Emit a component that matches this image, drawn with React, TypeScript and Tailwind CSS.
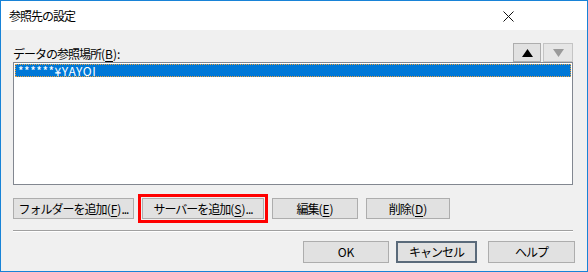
const font = "font-['Noto_Sans_CJK_JP',sans-serif]";

function Btn({
  w,
  children,
  strong,
  highlight,
}: {
  w: string;
  children: React.ReactNode;
  strong?: boolean;
  highlight?: boolean;
}) {
  return (
    <div
      className={`flex h-full shrink-0 items-center justify-center whitespace-nowrap bg-[#e1e1e1] text-[12px] leading-none tracking-[-1px] text-black ${w} ${
        strong ? "border-2 border-[#5a6a7a]" : "border border-[#adadad]"
      } ${highlight ? "outline-[3px] outline-offset-1 outline-[#ff0000] outline" : ""}`}
    >
      {children}
    </div>
  );
}

function Acc({ k }: { k: string }) {
  return (
    <span className="tracking-normal">
      (<span className="underline underline-offset-2">{k}</span>)
    </span>
  );
}

export default function App() {
  return (
    <div className={`flex h-[272px] w-[588px] flex-col border border-[#1883d7] bg-[#f0f0f0] ${font}`}>
      {/* タイトルバー */}
      <div className="flex h-[29px] shrink-0 items-center justify-between bg-white pl-[8px] pr-[73px]">
        <span className="text-[12px] tracking-[-1px] text-black">参照先の設定</span>
        <svg width="11" height="11" viewBox="0 0 11 11" className="mt-[1px]">
          <path d="M0.5 0.5 L10.5 10.5 M10.5 0.5 L0.5 10.5" stroke="#111" strokeWidth="1" />
        </svg>
      </div>

      {/* 本体 */}
      <div className="flex flex-1 flex-col pl-[12px] pr-[14px] pt-[12px]">
        <div className="flex h-[20px] items-end justify-between">
          <span className="pb-[2px] text-[12px] leading-none tracking-[-1px] text-black">
            データの参照場所<Acc k="B" />:
          </span>
          <div className="flex h-[19px] gap-[2px]">
            <div className="flex w-[28px] items-center justify-center border border-[#adadad] bg-[#e1e1e1]">
              <svg width="11" height="8" viewBox="0 0 11 8">
                <path d="M5.5 0 L11 8 L0 8 Z" fill="#000" />
              </svg>
            </div>
            <div className="flex w-[30px] items-center justify-center border border-[#c4c4c4] bg-[#e6e6e6]">
              <svg width="11" height="8" viewBox="0 0 11 8">
                <path d="M0 0 L11 0 L5.5 8 Z" fill="#9a9a9a" />
              </svg>
            </div>
          </div>
        </div>

        {/* リスト */}
        <div className="h-[123px] border border-[#828790] bg-white p-px">
          <div className="flex h-[13px] items-center border border-dotted border-[#e8a040] bg-[#0078d7] pl-[2px] text-[12px] leading-none tracking-[0.5px] text-white">
            ******¥YAYOI
          </div>
        </div>

        <div className="mt-[13px] flex h-[21px] gap-[8px]">
          <Btn w="w-[121px]">
            フォルダーを追加<Acc k="F" />...
          </Btn>
          <Btn w="w-[122px]" highlight>
            サーバーを追加<Acc k="S" />...
          </Btn>
          <Btn w="w-[86px]">
            編集<Acc k="E" />
          </Btn>
          <Btn w="w-[84px]">
            削除<Acc k="D" />
          </Btn>
        </div>

        <div className="mt-[11px] h-[2px] border-t border-[#a0a0a0] border-b border-b-white" />

        <div className="-mr-[2px] mt-[9px] flex h-[22px] justify-end">
          <Btn w="w-[86px]">
            <span className="tracking-normal">OK</span>
          </Btn>
          <div className="w-[7px]" />
          <Btn w="w-[81px]" strong>
            キャンセル
          </Btn>
          <div className="w-[11px]" />
          <Btn w="w-[87px]">ヘルプ</Btn>
        </div>
      </div>
    </div>
  );
}
